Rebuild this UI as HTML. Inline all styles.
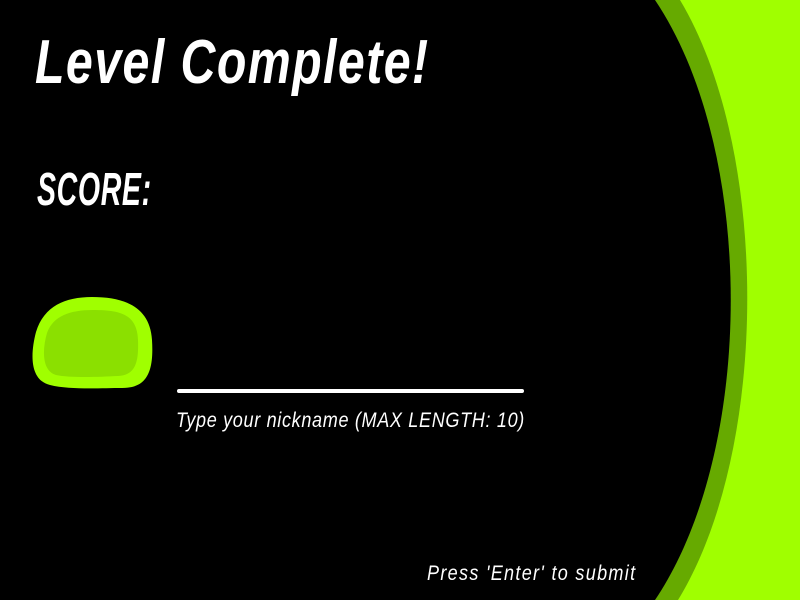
<!DOCTYPE html>
<html><head><style>html,body{margin:0;padding:0;background:#000;overflow:hidden}</style></head>
<body>
<svg width="800" height="600" viewBox="0 0 800 600" xmlns="http://www.w3.org/2000/svg" style="display:block">
<rect width="800" height="600" fill="#a0ff00"/>
<path d="M0 0 H680 C770 150 770 450 678 600 H0 Z" fill="#66aa00"/>
<path d="M0 0 H655 C756 150 756 450 655 600 H0 Z" fill="#000"/>
<g font-family="Liberation Sans, sans-serif" font-style="italic" fill="#fff">
<text transform="translate(35,83) scale(0.78,1)" font-size="62" font-weight="bold" textLength="504" lengthAdjust="spacing">Level Complete!</text>
<text transform="translate(37,205) scale(0.62,1)" font-size="46" font-weight="bold" textLength="184" lengthAdjust="spacing">SCORE:</text>
<text transform="translate(176,427) scale(0.86,1)" font-size="21" textLength="405" lengthAdjust="spacing">Type your nickname (MAX LENGTH: 10)</text>
<text transform="translate(427,580) scale(0.86,1)" font-size="21" textLength="242" lengthAdjust="spacing">Press 'Enter' to submit</text>
</g>
<rect x="177" y="389" width="347" height="4" rx="2" fill="#fff"/>
<path d="M36 332 C44 306 65 297 92 297 C125 297 150 307 152 340 C154 372 147 388 122 388 C100 388 70 390 50 385 C30 380 30 355 36 332 Z" fill="#a0ff00"/>
<path d="M47 333 C53 316 70 310 93 310 C120 310 137 314 138 340 C139 365 134 375 118 376 C98 377 70 378 56 375 C42 371 42 350 47 333 Z" fill="#8be000"/>
</svg>
</body></html>
